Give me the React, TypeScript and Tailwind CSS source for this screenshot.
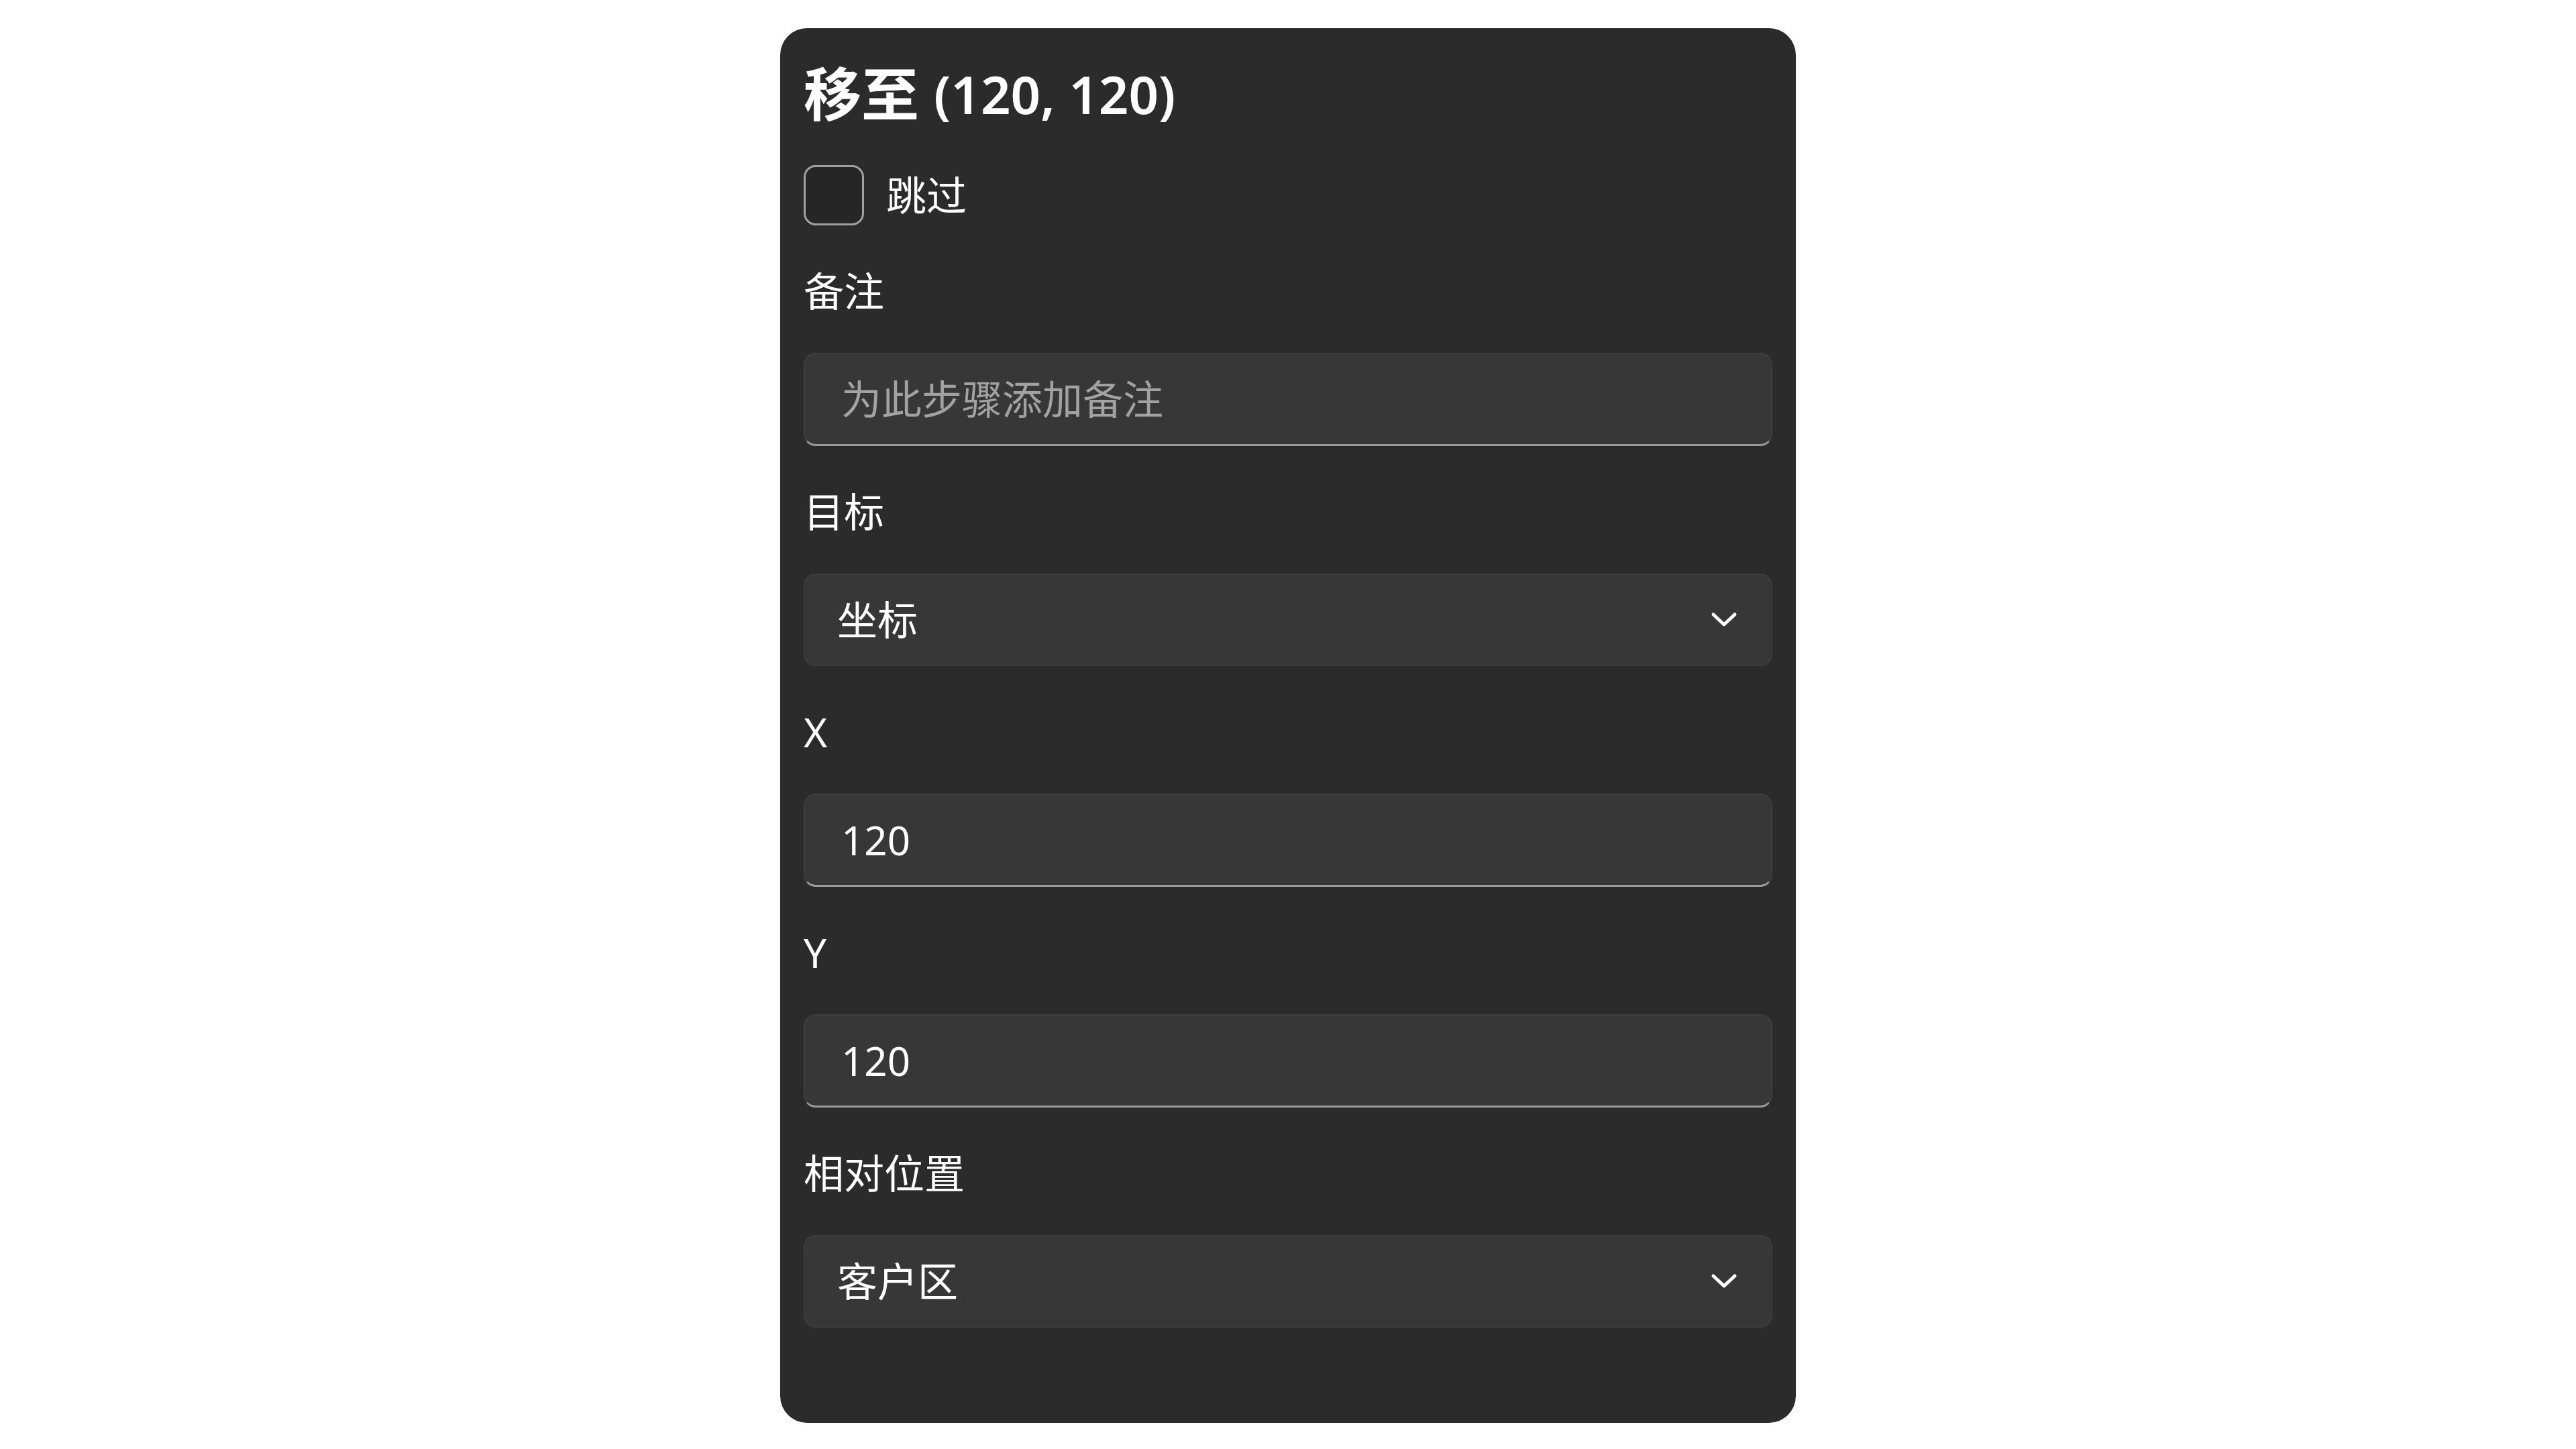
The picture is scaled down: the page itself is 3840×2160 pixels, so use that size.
import { useState } from "react";

const fontStack = "font-['Noto_Sans','Noto_Sans_CJK_SC',sans-serif]";

const Chevron = () => (
  <svg width="40" height="24" viewBox="0 0 40 24" fill="none">
    <path
      d="M4 4 L20 19 L36 4"
      stroke="#ffffff"
      strokeWidth="5"
      strokeLinecap="round"
      strokeLinejoin="round"
    />
  </svg>
);

const Field = ({ label, children }: { label: string; children: React.ReactNode }) => (
  <div className="flex flex-col">
    <div className="text-[60px] leading-[80px] text-white">{label}</div>
    <div className="mt-[52px] flex">{children}</div>
  </div>
);

const TextBox = ({ value, placeholder }: { value?: string; placeholder?: string }) => (
  <input
    defaultValue={value}
    placeholder={placeholder}
    className="h-[139px] w-full rounded-[18px] bg-[#373737] border-2 border-[#3e3e3e] border-b-[3px] border-b-[#9b9b9b] pl-[54px] pr-[52px] text-[60px] text-white placeholder:text-[#a2a2a2] outline-none"
  />
);

const ComboBox = ({ value }: { value: string }) => (
  <div className="flex h-[138px] w-full items-center justify-between rounded-[18px] bg-[#373737] border-2 border-[#3d3d3d] pl-[48px] pr-[50px] cursor-pointer">
    <span className="text-[60px] leading-none text-white">{value}</span>
    <Chevron />
  </div>
);

export default function App() {
  const [skip, setSkip] = useState(false);

  return (
    <div className={`min-h-screen bg-white flex items-start justify-center pt-[42px] ${fontStack}`}>
      <div className="w-[1514px] rounded-[40px] bg-[#2b2b2b] px-[35px] pt-[40px] pb-[142px]">
        <h1 className="flex h-[116px] items-center gap-[22px] font-semibold text-white">
          <span className="text-[86px] leading-none">移至</span>
          <span className="text-[78px] leading-none">(120, 120)</span>
        </h1>

        <label className="mt-[48px] flex items-center gap-[33px] cursor-pointer">
          <span
            onClick={() => setSkip((s) => !s)}
            className={`h-[90px] w-[90px] rounded-[18px] border-[3px] ${
              skip ? "border-[#60cdff] bg-[#60cdff]" : "border-[#a1a1a1] bg-[#262626]"
            }`}
          />
          <span className="text-[60px] leading-[80px] text-white">跳过</span>
        </label>

        <div className="mt-[58px] flex flex-col gap-[58px]">
          <Field label="备注">
            <TextBox placeholder="为此步骤添加备注" />
          </Field>
          <Field label="目标">
            <ComboBox value="坐标" />
          </Field>
          <Field label="X">
            <TextBox value="120" />
          </Field>
          <Field label="Y">
            <TextBox value="120" />
          </Field>
          <Field label="相对位置">
            <ComboBox value="客户区" />
          </Field>
        </div>
      </div>
    </div>
  );
}
